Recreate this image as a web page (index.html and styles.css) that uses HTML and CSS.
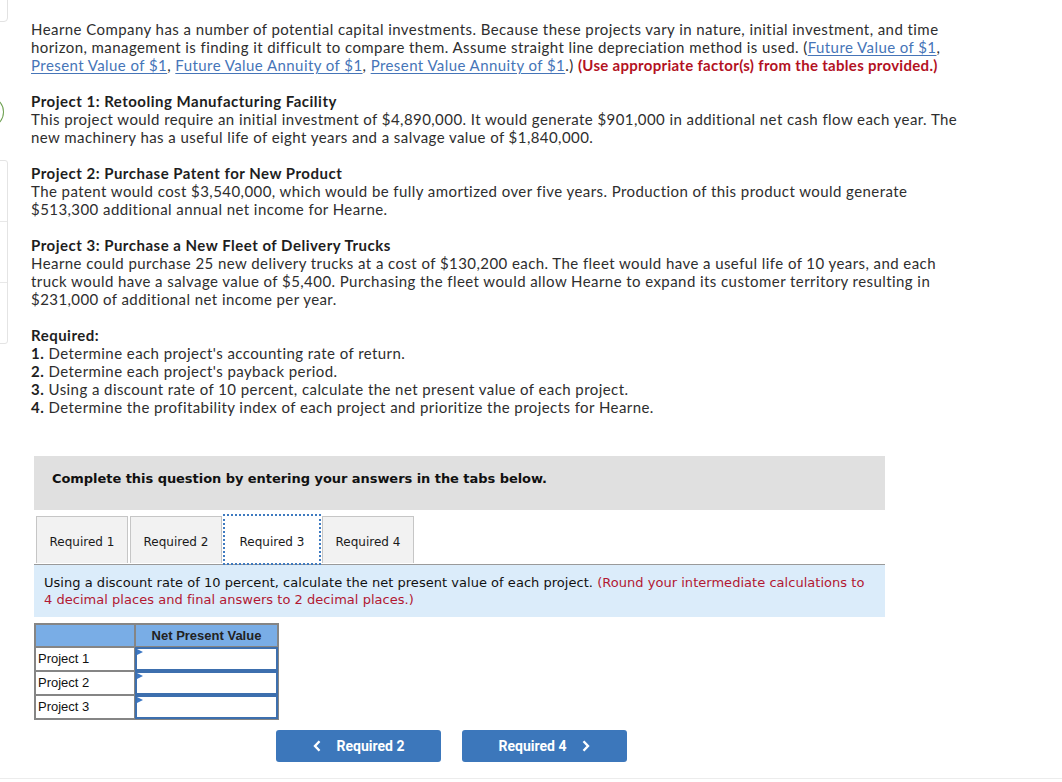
FILE: index.html
```html
<!DOCTYPE html>
<html>
<head>
<meta charset="utf-8">
<link rel="stylesheet" href="styles.css">
</head>
<body>
<div class="rail">
  <div class="rail-top"></div>
  <div class="rail-dot"></div>
  <div class="rail-list"><div class="rail-item"></div><div class="rail-item"></div><div class="rail-item"></div></div>
</div>
<main class="page">
  <p class="para">Hearne Company has a number of potential capital investments. Because these projects vary in nature, initial investment, and time<br>horizon, management is finding it difficult to compare them. Assume straight line depreciation method is used. (<a href="#">Future Value of $1</a>,<br><a href="#">Present Value of $1</a>, <a href="#">Future Value Annuity of $1</a>, <a href="#">Present Value Annuity of $1</a>.) <strong class="warn">(Use appropriate factor(s) from the tables provided.)</strong></p>

  <p class="para"><strong>Project 1: Retooling Manufacturing Facility</strong><br>This project would require an initial investment of $4,890,000. It would generate $901,000 in additional net cash flow each year. The<br>new machinery has a useful life of eight years and a salvage value of $1,840,000.</p>

  <p class="para"><strong>Project 2: Purchase Patent for New Product</strong><br>The patent would cost $3,540,000, which would be fully amortized over five years. Production of this product would generate<br>$513,300 additional annual net income for Hearne.</p>

  <p class="para"><strong>Project 3: Purchase a New Fleet of Delivery Trucks</strong><br>Hearne could purchase 25 new delivery trucks at a cost of $130,200 each. The fleet would have a useful life of 10 years, and each<br>truck would have a salvage value of $5,400. Purchasing the fleet would allow Hearne to expand its customer territory resulting in<br>$231,000 of additional net income per year.</p>

  <p class="para"><strong>Required:</strong><br><strong>1.</strong> Determine each project's accounting rate of return.<br><strong>2.</strong> Determine each project's payback period.<br><strong>3.</strong> Using a discount rate of 10 percent, calculate the net present value of each project.<br><strong>4.</strong> Determine the profitability index of each project and prioritize the projects for Hearne.</p>

  <section class="question">
    <div class="q-banner">Complete this question by entering your answers in the tabs below.</div>
    <div class="tabs">
      <div class="tab">Required 1</div>
      <div class="tab">Required 2</div>
      <div class="tab active">Required 3</div>
      <div class="tab">Required 4</div>
    </div>
    <div class="instr">Using a discount rate of 10 percent, calculate the net present value of each project. <span class="instr-red">(Round your intermediate calculations to<br>4 decimal places and final answers to 2 decimal places.)</span></div>

    <table class="npv">
      <tr><th class="corner"></th><th class="hdr">Net Present Value</th></tr>
      <tr><td class="lbl">Project 1</td><td class="cell"><div class="inp"></div></td></tr>
      <tr><td class="lbl">Project 2</td><td class="cell"><div class="inp"></div></td></tr>
      <tr><td class="lbl">Project 3</td><td class="cell"><div class="inp"></div></td></tr>
    </table>

    <div class="nav">
      <button class="btn"><svg class="chev" width="8" height="12" viewBox="0 0 8 12"><path d="M6.5 1.2 L2 6 L6.5 10.8" fill="none" stroke="#fff" stroke-width="2.4"/></svg><span>Required 2</span></button>
      <button class="btn"><span>Required 4</span><svg class="chev" width="8" height="12" viewBox="0 0 8 12"><path d="M1.5 1.2 L6 6 L1.5 10.8" fill="none" stroke="#fff" stroke-width="2.4"/></svg></button>
    </div>
  </section>
</main>
<div class="footer-line"></div>
</body>
</html>
```
FILE: styles.css
```css
html, body { margin: 0; padding: 0; background: #fff; }
body { position: relative; width: 1062px; height: 782px; overflow: hidden; }

.rail { position: absolute; left: 0; top: 0; width: 8px; height: 360px; }
.rail-top { position: absolute; left: -20px; top: -10px; width: 26px; height: 30px; border: 1px solid #e2e2e2; border-radius: 4px; }
.rail-dot { position: absolute; left: -20px; top: 98px; width: 22px; height: 26px; border: 1px solid #6da050; border-radius: 50%; }
.rail-list { position: absolute; left: -20px; top: 160px; width: 26px; height: 182px; border: 1px solid #e4e4e4; border-radius: 3px; display: flex; flex-direction: column; }
.rail-item { flex: 1; border-bottom: 1px solid #e8e8e8; }
.rail-item:last-child { border-bottom: 0; }

.page { padding: 20px 0 0 31px; font-family: Lato, "Open Sans", sans-serif; font-size: 15px; line-height: 18px; color: #2e2e2e; }
.para { margin: 0 0 18px 0; white-space: nowrap; letter-spacing: 0.43px; }
.para strong { font-weight: 700; color: #1e1e1e; letter-spacing: 0.5px; }
.para a { color: #4675b8; text-decoration: underline; text-underline-offset: 2px; }
.para strong.warn { color: #b3121f; letter-spacing: 0.3px; }

.question { margin: 40px 0 0 3px; width: 851px; font-family: "DejaVu Sans", Verdana, sans-serif; }
.q-banner { background: #e0e0e0; height: 54px; box-sizing: border-box; padding: 14px 0 0 18px; font-size: 13px; font-weight: bold; color: #111; letter-spacing: -0.05px; }

.tabs { display: flex; gap: 2px; margin-top: 6px; padding-left: 2px; height: 48px; }
.tab { width: 92px; height: 47px; box-sizing: border-box; border: 1px solid #c6c6c6; border-bottom: 0; background: #f2f2f2; display: flex; align-items: center; justify-content: center; padding-top: 3px; font-size: 12px; color: #1a1a1a; }
.tab.active { background: #fff; width: 96px; border: 0; outline: 2px dotted #3e7ac0; outline-offset: -1px; height: 49px; margin-top: -1px; padding-top: 5px; position: relative; z-index: 1; }

.instr { background: #dbecfa; border-top: 1px solid #9a9a9a; padding: 9px 10px 9px 10px; font-size: 13px; line-height: 17px; color: #111; letter-spacing: 0.03px; white-space: nowrap; }
.instr-red { color: #b21832; }

.npv { margin-top: 6px; border-collapse: collapse; font-family: "Liberation Sans", Arial, sans-serif; font-size: 13px; }
.npv th, .npv td { border: 2px solid #858585; padding: 0; }
.npv th { background: #79ade6; height: 21px; }
.corner { width: 98px; }
.hdr { width: 141px; font-weight: bold; color: #222; text-align: center; }
.lbl { height: 22px; padding-left: 2px !important; color: #111; }
.cell { height: 22px; }
.inp { height: 20px; border: 2px solid #3d6fae; margin: -1px; position: relative; background: #fff; }
.inp::before { content: ""; position: absolute; left: 0; top: 0; border-left: 6px solid #3d78c4; border-top: 3px solid transparent; border-bottom: 3px solid transparent; }

.nav { display: flex; gap: 21px; margin: 10px 0 0 242px; }
.btn { width: 165px; height: 32px; border: 0; border-radius: 3px; background: #3c77bb; color: #fff; font-family: Roboto, "Liberation Sans", sans-serif; font-weight: 700; font-size: 14px; display: flex; align-items: center; justify-content: center; gap: 16px; padding: 0; }
.chev { display: block; }

.footer-line { position: absolute; left: 0; right: 0; top: 778px; height: 0; border-top: 1px solid #ececec; }
```
